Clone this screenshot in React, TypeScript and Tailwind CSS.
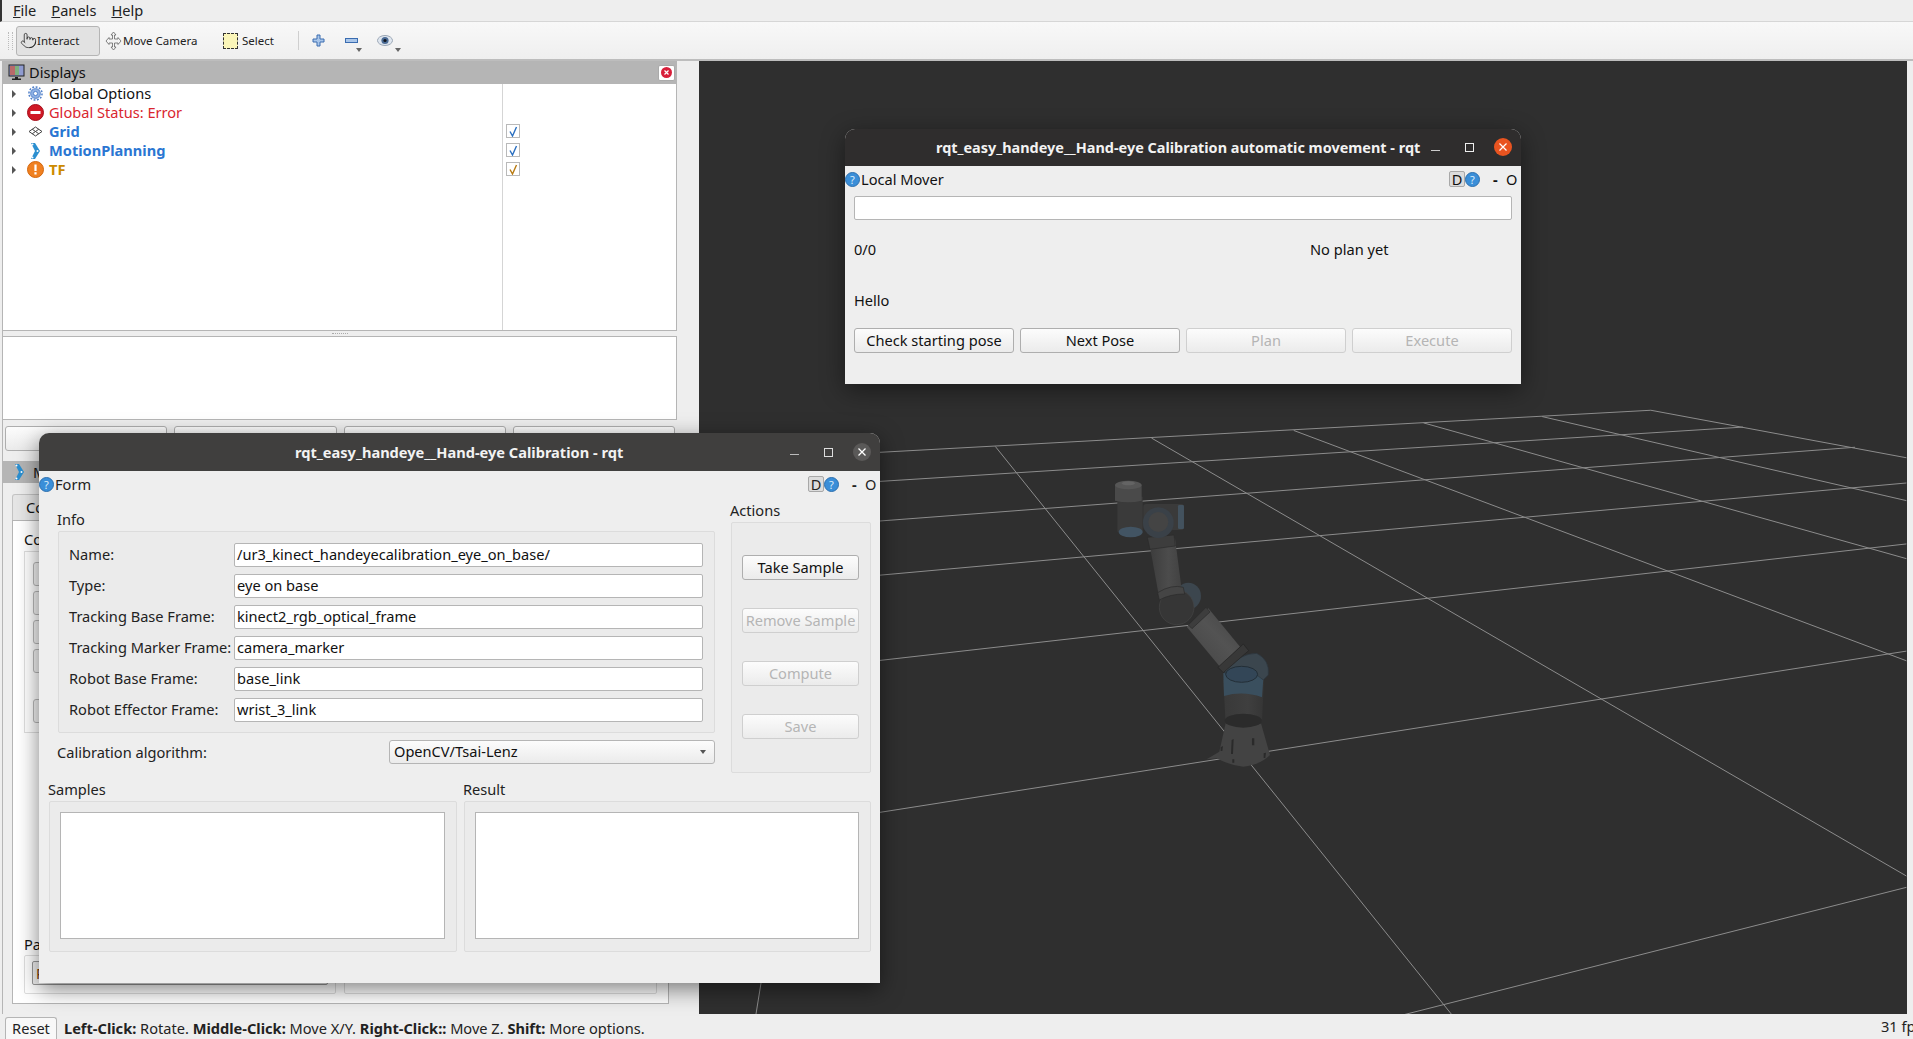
import React from "react";
import { Pointer } from "lucide-react";

type P = [number, number];
const GRID: P[][] = [
  [[-140, 184], [1170, 72]],
  [[-140, 255], [1310, 112]],
  [[-140, 352], [1480, 160]],
  [[-140, 484], [1558, 245]],
  [[-140, 692], [1558, 390]],
  [[-140, 1063], [1558, 645]],
  [[795, 1510], [1558, 1207]],
  [[1170, 72], [1558, 185]],
  [[1005, 87], [1558, 287]],
  [[825, 102], [1558, 425]],
  [[628, 120], [1558, 668]],
  [[412, 138], [1558, 1180]],
  [[175, 158], [868, 1510]],
];
const Z = (p: P): P => [880 + p[0] / 1.5179, 380 + p[1] / 2.379];

function Robot() {
  return (
    <g transform="translate(1060 440) scale(0.3333)">
      <defs>
        <linearGradient id="arm1" x1="0" y1="0" x2="1" y2="0">
          <stop offset="0" stopColor="#3c3c3c" />
          <stop offset="0.6" stopColor="#4c4c4c" />
          <stop offset="1" stopColor="#424242" />
        </linearGradient>
        <linearGradient id="arm2" x1="0" y1="1" x2="1" y2="0">
          <stop offset="0" stopColor="#434343" />
          <stop offset="0.55" stopColor="#535353" />
          <stop offset="1" stopColor="#424242" />
        </linearGradient>
        <linearGradient id="col" x1="0" y1="0" x2="1" y2="0">
          <stop offset="0" stopColor="#393939" />
          <stop offset="0.6" stopColor="#3f3f3f" />
          <stop offset="1" stopColor="#353535" />
        </linearGradient>
      </defs>
      <path d="M497 850 Q550 865 603 850 L630 945 Q600 975 550 980 Q505 975 470 955 L440 958 L478 935 Z" fill="#434343" />
      <path d="M515 900 L521 897 L519 942 L513 942 Z M482 922 L489 918 L487 933 L482 933 Z M576 895 L583 895 L583 916 L576 916 Z M611 940 L618 938 L616 954 L611 954 Z M517 958 L523 958 L523 968 L517 968 Z" fill="#2a2a2a" />
      <path d="M490 720 L612 715 L606 845 Q550 865 497 850 Z" fill="url(#col)" />
      <ellipse cx="550" cy="842" rx="56" ry="21" fill="#2b2b2b" />
      <path d="M490 700 Q550 665 612 690 L606 772 Q550 752 492 768 Z" fill="#3a4f5e" />
      <path d="M495 690 Q540 640 590 640 Q630 660 625 705 L610 720 Q560 670 495 700 Z" fill="#3b464e" stroke="#2b343b" strokeWidth="2" />
      <ellipse cx="545" cy="703" rx="48" ry="24" fill="#334657" stroke="#232e36" strokeWidth="3" />
      <path d="M380 560 L445 505 L540 620 L480 680 Z" fill="url(#arm2)" />
      <path d="M474 682 L550 612 L566 632 L490 698 Z" fill="#383838" stroke="#232323" strokeWidth="2" />
      <path d="M385 555 L438 502 L450 516 L396 566 Z" fill="#3d3d3d" stroke="#2a2a2a" strokeWidth="2" />
      <ellipse cx="385" cy="468" rx="38" ry="40" fill="#3c464e" />
      <circle cx="350" cy="502" r="52" fill="#363636" stroke="#454545" strokeWidth="2" />
      <path d="M268 310 L345 295 L364 440 L295 458 Z" fill="url(#arm1)" />
      <path d="M293 458 Q335 432 370 442 L374 462 Q330 462 298 480 Z" fill="#454545" stroke="#2a2a2a" strokeWidth="2" />
      <path d="M262 292 L342 285 L346 318 L270 328 Z" fill="#3d3d3d" stroke="#2a2a2a" strokeWidth="2" />
      <rect x="250" y="192" width="122" height="78" rx="8" fill="#3a3a3a" />
      <rect x="354" y="195" width="18" height="72" rx="4" fill="#43525e" />
      <circle cx="295" cy="248" r="46" fill="#3a4148" />
      <circle cx="295" cy="246" r="30" fill="#444444" />
      <path d="M172 170 L248 170 L248 275 L172 275 Z" fill="#3a3a3a" />
      <ellipse cx="212" cy="276" rx="36" ry="16" fill="#425463" />
      <path d="M165 135 L245 135 L245 182 Q205 192 165 182 Z" fill="#4a4a4a" />
      <ellipse cx="205" cy="135" rx="40" ry="13" fill="#565656" />
      <ellipse cx="205" cy="130" rx="20" ry="6" fill="#646464" />
    </g>
  );
}

function Viewport() {
  return (
    <svg className="block w-full h-full" viewBox="699 61 1208 953">
      {GRID.map((l, i) => {
        const a = Z(l[0]);
        const b = Z(l[1]);
        return <line key={i} x1={a[0]} y1={a[1]} x2={b[0]} y2={b[1]} stroke="#8c8c8c" strokeWidth="1" />;
      })}
      <line x1="761" y1="983" x2="756" y2="1014" stroke="#8c8c8c" strokeWidth="1" />
      <Robot />
    </svg>
  );
}

function Caret() {
  return <span className="w-0 h-0 border-y-[4px] border-y-transparent border-l-[4px] border-l-[#555555]" />;
}

function Check({ color }: { color: string }) {
  return (
    <span className="flex items-center justify-center w-[14px] h-[14px] bg-white border border-[#b9b9b9]">
      <svg width="10" height="11" viewBox="0 0 10 11">
        <path d="M2 5.5 L4.5 10 L8.5 1" fill="none" stroke={color} strokeWidth="1.4" />
      </svg>
    </span>
  );
}

const ICONS: Record<string, React.ReactNode> = {
  gear: (
    <svg width="15" height="15" viewBox="0 0 16 16">
      <circle cx="8" cy="8" r="5.2" fill="#8fb1e4" stroke="#4f7fc9" strokeWidth="1" />
      <circle cx="8" cy="8" r="7" fill="none" stroke="#4f7fc9" strokeWidth="1.6" strokeDasharray="2 1.66" />
      <circle cx="8" cy="8" r="2.2" fill="#ffffff" stroke="#4f7fc9" />
    </svg>
  ),
  error: (
    <svg width="17" height="17" viewBox="0 0 17 17">
      <circle cx="8.5" cy="8.5" r="8" fill="#d01926" stroke="#a50f1a" />
      <rect x="3.5" y="7" width="10" height="3" fill="#ffffff" />
    </svg>
  ),
  grid: (
    <svg width="15" height="11" viewBox="0 0 15 11">
      <path d="M7.5 1 L14 5.5 L7.5 10 L1 5.5 Z M4.2 3.2 L10.8 7.8 M10.8 3.2 L4.2 7.8" fill="#ffffff" stroke="#444444" strokeWidth="1" />
    </svg>
  ),
  mp: (
    <svg width="12" height="18" viewBox="0 0 12 18">
      <path d="M2 1 L6 1 L11 9 L6 17 L2 17 L6 9 Z" fill="#2b8fd0" />
      <circle cx="3.5" cy="2.5" r="1" fill="#ffffff" />
      <circle cx="3.5" cy="15.5" r="1" fill="#ffffff" />
      <circle cx="8.5" cy="9" r="1" fill="#ffffff" />
    </svg>
  ),
  tf: (
    <svg width="17" height="17" viewBox="0 0 17 17">
      <circle cx="8.5" cy="8.5" r="8" fill="#f08020" stroke="#d2660c" />
      <rect x="7.4" y="3.5" width="2.2" height="6.5" fill="#ffffff" />
      <rect x="7.4" y="11.2" width="2.2" height="2.3" fill="#ffffff" />
    </svg>
  ),
};

function TreeRow({ icon, label, cls }: { icon: string; label: string; cls: string }) {
  return (
    <div className="flex items-center h-[19px] pl-[9px]">
      <Caret />
      <span className="flex items-center justify-center w-[18px] ml-[10px]">{ICONS[icon]}</span>
      <span className={"ml-[5px] whitespace-nowrap " + cls}>{label}</span>
    </div>
  );
}

function Help() {
  return (
    <span className="flex items-center justify-center shrink-0 w-[15px] h-[15px] rounded-full bg-[#3a8ed8] border border-[#2c6fae] text-[#dcecf9] text-[11px] leading-none">?</span>
  );
}

function QButton({ children, disabled }: { children: React.ReactNode; disabled?: boolean }) {
  return (
    <div
      className={
        "flex items-center justify-center h-[25px] pb-[1px] rounded-[3px] border bg-gradient-to-b from-[#fcfcfc] to-[#ebebeb] whitespace-nowrap " +
        (disabled ? "border-[#cfcfcf] text-[#b5b5b5]" : "border-[#aeaeae] text-[#111111]")
      }
    >
      {children}
    </div>
  );
}

function WinHeader({ title }: { title: string }) {
  return (
    <div className="flex items-center h-[26px] shrink-0">
      <div className="ml-0 mr-auto flex items-center gap-[1px]">
        <Help />
        <span>{title}</span>
      </div>
      <span className="flex items-center justify-center w-[16px] h-[16px] bg-[#dcdcdc] border border-[#a8a8a8] rounded-[2px]">D</span>
      <Help />
      <span className="ml-[13px] w-[13px] font-bold">-</span>
      <span className="w-[14px] mr-[1px]">O</span>
    </div>
  );
}

function Field({ label, value }: { label: string; value: string }) {
  return (
    <div className="flex items-center h-[24px]">
      <span className="w-[175px] pl-[10px] pb-[2px] whitespace-nowrap text-[#222222]">{label}</span>
      <span className="flex-1 flex items-center h-[24px] pl-[2px] pb-[1px] bg-white border border-[#b5b5b5] rounded-[2px] text-[#111111]">{value}</span>
    </div>
  );
}

function Group({ label, children }: { label: string; children?: React.ReactNode }) {
  return (
    <div className="flex flex-col">
      <div className="h-[21px] pb-[3px] flex items-center -ml-[1px]">{label}</div>
      {children}
    </div>
  );
}

function ListGroup({ label, className }: { label: string; className: string }) {
  return (
    <div className={"flex flex-col " + className}>
      <div className="h-[21px] pb-[3px] flex items-center -ml-[1px]">{label}</div>
      <div className="h-[151px] bg-[#ebebeb] border border-[#dcdcdc] rounded-[2px] pl-[10px] pr-[11px] py-[10px]">
        <div className="w-full h-[127px] bg-white border border-[#b5b5b5]" />
      </div>
    </div>
  );
}

function FormWindow() {
  const fields: [string, string][] = [
    ["Name:", "/ur3_kinect_handeyecalibration_eye_on_base/"],
    ["Type:", "eye on base"],
    ["Tracking Base Frame:", "kinect2_rgb_optical_frame"],
    ["Tracking Marker Frame:", "camera_marker"],
    ["Robot Base Frame:", "base_link"],
    ["Robot Effector Frame:", "wrist_3_link"],
  ];
  return (
    <div className="absolute left-[39px] top-[433px] w-[841px] h-[550px] flex flex-col rounded-t-[10px] bg-[#eeeeee] text-[#222222] shadow-[0_6px_22px_rgba(0,0,0,0.5)]">
      <div className="flex items-center h-[38px] shrink-0 rounded-t-[10px] bg-[#403f3e] text-[#f2f2f2]">
        <span className="ml-[256px] font-bold whitespace-nowrap">rqt_easy_handeye__Hand-eye Calibration - rqt</span>
        <span className="ml-auto w-[9px] h-[1px] mt-[5px] bg-[#bbbbbb]" />
        <span className="ml-[25px] w-[9px] h-[9px] border border-[#dddddd]" />
        <span className="ml-[20px] mr-[9px] flex items-center justify-center w-[18px] h-[18px] rounded-full bg-[#5a5958]">
          <svg width="10" height="10" viewBox="0 0 10 10">
            <path d="M1.5 1.5 L8.5 8.5 M8.5 1.5 L1.5 8.5" stroke="#ffffff" strokeWidth="1.3" />
          </svg>
        </span>
      </div>
      <WinHeader title="Form" />
      <div className="flex pl-[19px] pr-[9px] pt-[4px] h-[283px] shrink-0">
        <div className="w-[657px] pt-[9px]">
          <Group label="Info">
            <div className="h-[202px] flex flex-col gap-[7px] pt-[11px] pr-[11px] bg-[#ebebeb] border border-[#dcdcdc] rounded-[2px]">
              {fields.map((f) => (
                <Field key={f[0]} label={f[0]} value={f[1]} />
              ))}
            </div>
          </Group>
          <div className="flex items-center justify-between mt-[7px] -ml-[1px]">
            <span>Calibration algorithm:</span>
            <div className="flex items-center w-[326px] h-[24px] pl-[4px] pr-[8px] pb-[1px] rounded-[3px] border border-[#b5b5b5] bg-gradient-to-b from-[#fcfcfc] to-[#ebebeb] text-[#111111]">
              <span>OpenCV/Tsai-Lenz</span>
              <span className="ml-auto w-0 h-0 border-x-[3px] border-x-transparent border-t-[4px] border-t-[#555555]" />
            </div>
          </div>
        </div>
        <div className="ml-[16px] w-[140px]">
          <Group label="Actions">
            <div className="h-[251px] flex flex-col gap-[28px] pt-[32px] pl-[10px] pr-[11px] bg-[#ebebeb] border border-[#dcdcdc] rounded-[2px]">
              <QButton>Take Sample</QButton>
              <QButton disabled>Remove Sample</QButton>
              <QButton disabled>Compute</QButton>
              <QButton disabled>Save</QButton>
            </div>
          </Group>
        </div>
      </div>
      <div className="flex gap-[7px] pl-[10px]">
        <ListGroup label="Samples" className="w-[408px]" />
        <ListGroup label="Result" className="w-[407px]" />
      </div>
    </div>
  );
}

function MoverWindow() {
  return (
    <div className="absolute left-[845px] top-[129px] w-[676px] h-[255px] flex flex-col rounded-t-[10px] bg-[#eeeeee] text-[#111111] shadow-[0_6px_24px_rgba(0,0,0,0.45)]">
      <div className="flex items-center h-[37px] pb-[1px] shrink-0 rounded-t-[10px] bg-[#2f2d2d] text-[#f2f2f2]">
        <span className="ml-[91px] font-bold text-[14.45px] whitespace-nowrap">rqt_easy_handeye__Hand-eye Calibration automatic movement - rqt</span>
        <span className="ml-auto w-[9px] h-[1px] mt-[6px] bg-[#cccccc]" />
        <span className="ml-[25px] w-[9px] h-[9px] border border-[#eeeeee]" />
        <span className="ml-[20px] mr-[9px] flex items-center justify-center w-[18px] h-[18px] rounded-full bg-[#e95420]">
          <svg width="10" height="10" viewBox="0 0 10 10">
            <path d="M1.5 1.5 L8.5 8.5 M8.5 1.5 L1.5 8.5" stroke="#ffffff" strokeWidth="1.2" />
          </svg>
        </span>
      </div>
      <WinHeader title="Local Mover" />
      <div className="flex flex-col px-[9px] pt-[4px]">
        <div className="h-[24px] bg-white border border-[#b5b5b5] rounded-[2px]" />
        <div className="flex items-center h-[20px] mt-[19px] mb-[1px]">
          <span className="w-[456px]">0/0</span>
          <span>No plan yet</span>
        </div>
        <div className="flex items-center h-[20px] mt-[30px] mb-[1px]">Hello</div>
        <div className="grid grid-cols-4 gap-[6px] mt-[17px]">
          <QButton>Check starting pose</QButton>
          <QButton>Next Pose</QButton>
          <QButton disabled>Plan</QButton>
          <QButton disabled>Execute</QButton>
        </div>
      </div>
    </div>
  );
}

function ToolBar() {
  return (
    <div className="flex items-center h-[39px] shrink-0 bg-gradient-to-b from-[#f8f8f8] to-[#efefef] border-b-2 border-[#bdbdbd] text-[11.5px] text-[#222222]">
      <div className="ml-[8px] w-[5px] h-[18px] border-x border-dotted border-[#bbbbbb]" />
      <div className="ml-[3px] flex items-center w-[84px] h-[30px] pl-[3px] rounded-[3px] bg-[#e2e2e2] border border-[#b5b5b5]">
        <Pointer size={17} strokeWidth={1} color="#111111" />
        <span>Interact</span>
      </div>
      <div className="ml-[5px] flex items-center w-[118px]">
        <svg width="17" height="20" viewBox="0 0 17 20">
          <path d="M8.5 1 L11 4 L9.5 4 L9.5 8 L13 8 L13 6.5 L16 10 L13 13.5 L13 12 L9.5 12 L9.5 16 L11 16 L8.5 19 L6 16 L7.5 16 L7.5 12 L4 12 L4 13.5 L1 10 L4 6.5 L4 8 L7.5 8 L7.5 4 L6 4 Z" fill="#f4f4f4" stroke="#666666" strokeWidth="0.8" />
        </svg>
        <span className="ml-[1px]">Move Camera</span>
      </div>
      <div className="flex items-center">
        <span className="w-[15px] h-[16px] bg-[#fbf6b9] border border-dashed border-[#333333]" />
        <span className="ml-[4px]">Select</span>
      </div>
      <div className="ml-[24px] w-px h-[19px] bg-[#cfcfcf]" />
      <svg className="ml-[13px]" width="13" height="13" viewBox="0 0 13 13">
        <path d="M5 1 H8 V5 H12 V8 H8 V12 H5 V8 H1 V5 H5 Z" fill="#a9c6ea" stroke="#3a6cb0" strokeWidth="1" />
      </svg>
      <div className="relative ml-[20px] w-[24px] h-[20px] flex items-center">
        <svg width="13" height="5" viewBox="0 0 13 5">
          <rect x="0.5" y="0.5" width="12" height="4" fill="#a9c6ea" stroke="#3a6cb0" />
        </svg>
        <span className="absolute right-[7px] bottom-[-1px] w-0 h-0 border-x-[3px] border-x-transparent border-t-[4px] border-t-[#666666]" />
      </div>
      <div className="relative ml-[8px] w-[24px] h-[20px] flex items-center">
        <svg width="16" height="13" viewBox="0 0 16 13">
          <ellipse cx="8" cy="6.5" rx="7.5" ry="5" fill="#dfe6ef" stroke="#9aa6b5" />
          <circle cx="8" cy="6.5" r="3.6" fill="#4a6a94" />
          <circle cx="8" cy="6.5" r="1.6" fill="#10151e" />
        </svg>
        <span className="absolute right-[0px] bottom-[-1px] w-0 h-0 border-x-[3px] border-x-transparent border-t-[4px] border-t-[#666666]" />
      </div>
    </div>
  );
}

function DisplaysPanel() {
  return (
    <div className="flex flex-col">
      <div className="flex items-center h-[23px] bg-[#b5b5b5] pl-[5px] pr-[2px]">
        <svg width="17" height="17" viewBox="0 0 17 17">
          <rect x="1" y="1" width="15" height="11" fill="#8f9bd0" stroke="#222222" />
          <rect x="2" y="2" width="5" height="9" fill="#b96a6a" />
          <rect x="7" y="2" width="4" height="9" fill="#7fb07f" />
          <path d="M7 13 H10 V14.5 H13 V16 H4 V14.5 H7 Z" fill="#222222" />
        </svg>
        <span className="ml-[4px] text-[#111111]">Displays</span>
        <span className="ml-auto flex items-center justify-center w-[17px] h-[16px] rounded-[2px] bg-white border border-[#aaaaaa]">
          <svg width="11" height="11" viewBox="0 0 11 11">
            <circle cx="5.5" cy="5.5" r="5.5" fill="#d81f3a" />
            <path d="M3.5 3.5 L7.5 7.5 M7.5 3.5 L3.5 7.5" stroke="#ffffff" strokeWidth="1.2" />
          </svg>
        </span>
      </div>
      <div className="flex h-[247px] bg-white border-x border-b border-[#b5b5b5] -ml-px">
        <div className="w-[500px] border-r border-[#d5d5d5]">
          <TreeRow icon="gear" label="Global Options" cls="text-[#111111]" />
          <TreeRow icon="error" label="Global Status: Error" cls="text-[#d9262f]" />
          <TreeRow icon="grid" label="Grid" cls="text-[#2a76d2] font-bold" />
          <TreeRow icon="mp" label="MotionPlanning" cls="text-[#2a76d2] font-bold" />
          <TreeRow icon="tf" label="TF" cls="text-[#cc8a00] font-bold" />
        </div>
        <div className="flex flex-col pl-[3px] pt-[40px] gap-[5px]">
          <Check color="#2a6fc0" />
          <Check color="#2a6fc0" />
          <Check color="#b87a10" />
        </div>
      </div>
      <div className="flex justify-center items-center h-[5px]">
        <span className="w-[16px] border-t border-dotted border-[#aaaaaa]" />
      </div>
      <div className="h-[84px] bg-white border border-[#b5b5b5] -ml-px" />
      <div className="grid grid-cols-4 gap-[7px] mt-[6px] pl-[2px] pr-[2px]">
        <QButton>Add</QButton>
        <QButton>Duplicate</QButton>
        <QButton>Rename</QButton>
        <QButton>Remove</QButton>
      </div>
    </div>
  );
}

function MotionPanel() {
  const stubs = ["h-[24px] mt-[10px]", "h-[24px] mt-[5px]", "h-[24px] mt-[5px]", "h-[24px] mt-[5px]", "h-[24px] mt-[26px]"];
  return (
    <div className="flex flex-col mt-[10px]">
      <div className="flex items-center h-[22px] bg-[#b5b5b5] pl-[10px]">
        {ICONS.mp}
        <span className="ml-[8px] text-[#111111]">MotionPlanning</span>
      </div>
      <div className="ml-[9px] mr-[8px] mt-[11px]">
        <div className="flex items-center w-[120px] h-[26px] pl-[13px] bg-[#e6e6e6] border border-b-0 border-[#c4c4c4] rounded-t-[3px] text-[#111111]">Context</div>
        <div className="h-[484px] bg-white border border-[#b5b5b5] px-[11px] flex flex-col">
          <div className="h-[20px] mt-[8px] flex items-center text-[#111111]">Context</div>
          <div className="h-[182px] mt-[2px] border border-[#dedede] pl-[8px] pr-[8px] flex flex-col">
            {stubs.map((s, i) => (
              <div key={i} className={"w-[200px] border border-[#b9b9b9] rounded-[3px] bg-[#f4f4f4] " + s} />
            ))}
          </div>
          <div className="mt-auto h-[20px] flex items-center text-[#111111]">Path</div>
          <div className="flex gap-[8px] mb-[9px] mt-[1px]">
            <div className="w-[312px] h-[39px] border border-[#dedede] rounded-[2px] px-[7px] pt-[5px]">
              <div className="h-[24px] border border-[#999999] rounded-[2px] bg-[#f2f2f2] pl-[3px] leading-[22px] text-[#7a3c00]">Planning Library</div>
            </div>
            <div className="w-[313px] h-[39px] border border-[#dedede] rounded-[2px]" />
          </div>
        </div>
      </div>
    </div>
  );
}

export default function App() {
  return (
    <div className="relative w-[1913px] h-[1039px] overflow-hidden flex flex-col bg-[#eeeeee] font-['Noto_Sans',sans-serif] text-[14.6px] leading-[19px]">
      <div className="flex items-center h-[22px] shrink-0 border-l-2 border-l-[#333333] border-b border-b-[#d6d6d6] pl-[11px] pb-[1px] gap-[15px] text-[#222222]">
        <span><span className="underline">F</span>ile</span>
        <span><span className="underline">P</span>anels</span>
        <span><span className="underline">H</span>elp</span>
      </div>
      <ToolBar />
      <div className="flex h-[953px] shrink-0">
        <div className="w-[699px] shrink-0 overflow-hidden">
          <div className="ml-[2px] w-[675px] h-full border-l border-[#b5b5b5]">
            <DisplaysPanel />
            <MotionPanel />
          </div>
        </div>
        <div className="w-[1208px] shrink-0 bg-[#2f2f2f]">
          <Viewport />
        </div>
      </div>
      <div className="flex h-[25px] shrink-0 items-end text-[#222222]">
        <div className="ml-[5px] flex items-center justify-center w-[52px] h-[22px] bg-[#f8f8f8] border border-b-0 border-[#b5b5b5] rounded-t-[3px]">Reset</div>
        <div className="ml-[7px] h-[22px] flex items-center whitespace-nowrap">
          <b>Left-Click:</b>&nbsp;Rotate.&nbsp;<b>Middle-Click:</b>&nbsp;Move X/Y.&nbsp;<b>Right-Click::</b>&nbsp;Move Z.&nbsp;<b>Shift:</b>&nbsp;More options.
        </div>
        <div className="ml-auto w-[32px] h-[25px] flex items-center overflow-hidden whitespace-nowrap">31 fps</div>
      </div>
      <MoverWindow />
      <FormWindow />
    </div>
  );
}
